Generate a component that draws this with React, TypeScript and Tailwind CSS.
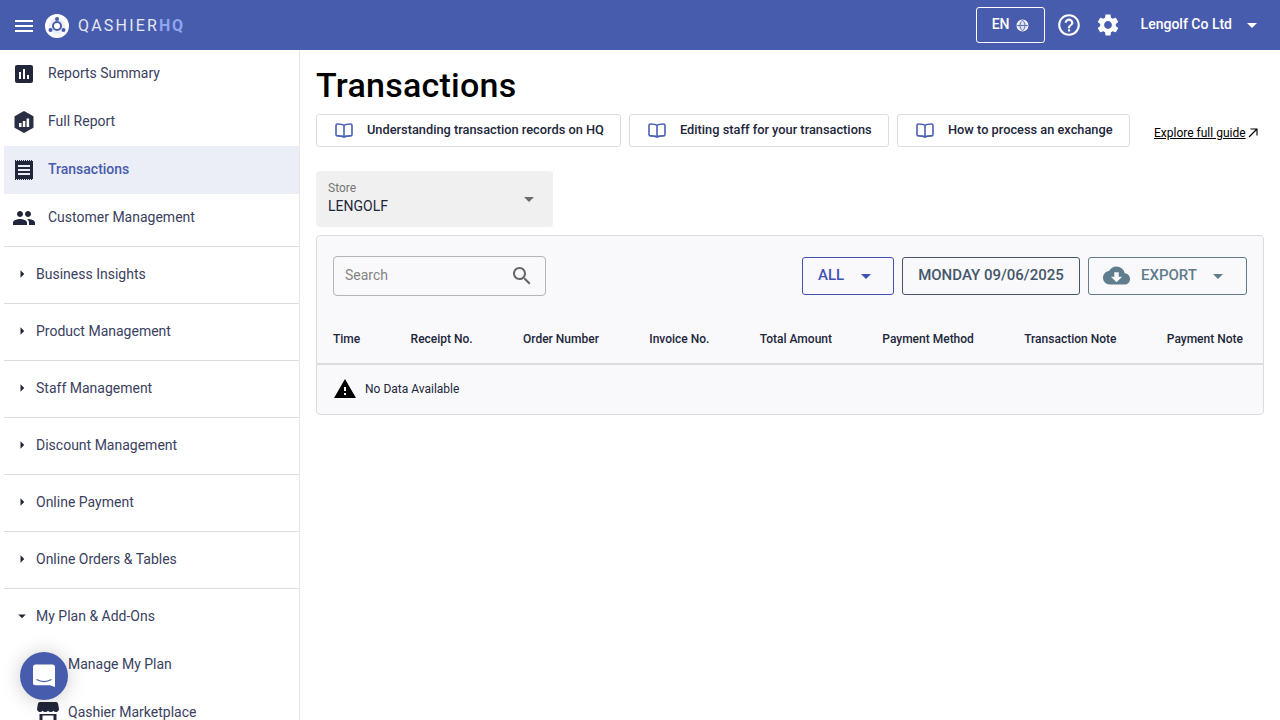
const menuItems = ['Business Insights', 'Product Management', 'Staff Management', 'Discount Management', 'Online Payment', 'Online Orders & Tables'];
const guides = [
  { label: 'Understanding transaction records on HQ', width: 'w-[305px]' },
  { label: 'Editing staff for your transactions', width: 'w-[260px]' },
  { label: 'How to process an exchange', width: 'w-[233px]' },
];
const columns = ['Time', 'Receipt No.', 'Order Number', 'Invoice No.', 'Total Amount', 'Payment Method', 'Transaction Note', 'Payment Note'];

function Icon({ d, className }: { d: string; className?: string }) {
  return (
    <svg viewBox="0 0 24 24" fill="currentColor" className={className}>
      <path d={d} />
    </svg>
  );
}

function Caret({ className }: { className?: string }) {
  return <Icon d="M7 10l5 5 5-5z" className={className} />;
}

function BookIcon() {
  return (
    <svg viewBox="0 0 18 15" fill="none" stroke="#4a5fb5" strokeWidth="1.600" strokeLinejoin="round" className="w-[18px] h-[15px]">
      <path d="M9 2.500C7.800 1.300 6 1 2.500 1 1.500 1 1 1.500 1 2.500v9c0 1 .5 1.400 1.500 1.400 3.500 0 5.300.3 6.500 1.300 1.200-1 3-1.300 6.500-1.300 1 0 1.500-.4 1.500-1.400v-9c0-1-.5-1.500-1.500-1.500C12 1 10.200 1.300 9 2.500zV14" />
    </svg>
  );
}

function NavItem({ label, active, icon }: { label: string; active?: boolean; icon: React.ReactNode }) {
  return (
    <div className={`h-12 ml-1 flex items-center text-sm ${active ? 'bg-[#ebeef6] text-[#485cad] font-medium' : 'text-[#3a4160]'}`}>
      <div className="w-11 pl-[8px] flex items-center text-[#22263a]">{icon}</div>
      <span className="-mt-0.5">{label}</span>
    </div>
  );
}

export default function App() {
  return (
    <div className="h-screen flex flex-col overflow-hidden bg-white font-['Roboto',sans-serif]">
      {/* Header */}
      <header className="h-[50px] flex-shrink-0 bg-[#485cad] flex items-center text-white">
        <Icon d="M3 18h18v-2H3v2zm0-5h18v-2H3v2zm0-7v2h18V6H3z" className="w-6 h-6 ml-3 mr-[9px] mt-0.5" />
        <svg viewBox="0 0 24 24" className="w-6 h-6 mt-0.5">
          <circle cx="12" cy="12" r="12" fill="#fff" />
          <circle cx="12" cy="12" r="8" fill="#eceef8" />
          <circle cx="12" cy="12" r="4" fill="#fff" stroke="#485cad" strokeWidth="2" />
          <circle cx="12" cy="5" r="2" fill="#485cad" />
          <circle cx="5.500" cy="16" r="2" fill="#485cad" />
          <circle cx="18.500" cy="16" r="2" fill="#485cad" />
        </svg>
        <div className="ml-[9px] mt-0.5 text-[16px] tracking-[2.200px] font-normal text-[#e4e7f4]">
          QASHIER<span className="font-bold tracking-[1.500px] text-[#8fa6ee]">HQ</span>
        </div>

        <div className="ml-auto flex items-center">
          <div className="w-[69px] h-9 border border-white rounded-[3px] flex items-center justify-center gap-[6px] text-sm font-medium">
            <span className="-mt-0.5">EN</span>
            <svg viewBox="0 0 24 24" fill="none" stroke="#fff" strokeWidth="2" className="w-[13px] h-[13px]">
              <circle cx="12" cy="12" r="10" fill="#dfe3f3" />
              <path d="M2 12h20M12 2c-6 6-6 14 0 20M12 2c6 6 6 14 0 20" stroke="#485cad" strokeWidth="1.500" />
            </svg>
          </div>
          <Icon d="M11 18h2v-2h-2v2zm1-16C6.480 2 2 6.480 2 12s4.480 10 10 10 10-4.480 10-10S17.520 2 12 2zm0 18c-4.410 0-8-3.590-8-8s3.590-8 8-8 8 3.590 8 8-3.590 8-8 8zm0-14c-2.210 0-4 1.790-4 4h2c0-1.100.9-2 2-2s2 .9 2 2c0 2-3 1.750-3 5h2c0-2.250 3-2.500 3-5 0-2.210-1.790-4-4-4z" className="w-[26px] h-[26px] ml-[11px]" />
          <Icon d="M19.140 12.940c.04-.3.06-.61.06-.94 0-.32-.02-.64-.07-.94l2.030-1.580c.18-.14.23-.41.12-.61l-1.920-3.320c-.12-.22-.37-.29-.59-.22l-2.390.96c-.5-.38-1.030-.7-1.620-.94l-.36-2.540c-.04-.24-.24-.41-.48-.41h-3.840c-.24 0-.43.17-.47.41l-.36 2.540c-.59.24-1.130.57-1.620.94l-2.390-.96c-.22-.08-.47 0-.59.22L2.740 8.870c-.12.21-.08.47.12.61l2.030 1.580c-.05.3-.09.63-.09.94s.02.64.07.94l-2.030 1.580c-.18.14-.23.41-.12.61l1.920 3.320c.12.22.37.29.59.22l2.390-.96c.5.38 1.030.7 1.620.94l.36 2.540c.05.24.24.41.48.41h3.840c.24 0 .44-.17.47-.41l.36-2.540c.59-.24 1.130-.56 1.620-.94l2.390.96c.22.08.47 0 .59-.22l1.920-3.320c.12-.22.07-.47-.12-.61l-2.010-1.580zM12 15.600c-1.980 0-3.600-1.620-3.600-3.600s1.620-3.600 3.600-3.600 3.600 1.620 3.600 3.600-1.620 3.600-3.600 3.600z" className="w-[26px] h-[26px] ml-[13px]" />
          <span className="ml-[20px] -mt-0.5 text-sm font-medium">Lengolf Co Ltd</span>
          <Caret className="w-6 h-6 ml-2 mr-4" />
        </div>
      </header>

      <div className="flex flex-1 overflow-hidden">
        {/* Sidebar */}
        <aside className="w-[300px] flex-shrink-0 border-r border-[#e6e6e6] overflow-hidden">
          <NavItem
            label="Reports Summary"
            icon={<Icon d="M19 3H5c-1.100 0-2 .9-2 2v14c0 1.100.9 2 2 2h14c1.100 0 2-.9 2-2V5c0-1.100-.9-2-2-2zM9 17H7v-7h2v7zm4 0h-2V7h2v10zm4 0h-2v-4h2v4z" className="w-6 h-6" />}
          />
          <NavItem
            label="Full Report"
            icon={
              <svg viewBox="0 0 24 24" className="w-6 h-6">
                <path d="M12 2l8.500 4.800v10.400L12 22l-8.500-4.800V6.800z" fill="#2b2f45" stroke="#2b2f45" strokeWidth="2" strokeLinejoin="round" />
                <path d="M7 13h2.500v4H7zM10.800 11h2.500v6h-2.500zM14.600 8.500h2.500V17h-2.500z" fill="#fff" />
              </svg>
            }
          />
          <NavItem
            label="Transactions"
            active
            icon={
              <svg viewBox="0 0 24 24" className="w-6 h-6">
                <path d="M3 3h18v18H3z" fill="#22263a" />
                <path d="M3 2.500h18M3 21.500h18" stroke="#22263a" strokeWidth="1" strokeDasharray="1 1" />
                <path d="M6 7h12v2H6zM6 11h12v2H6zM6 15h12v2H6z" fill="#ebeef6" />
              </svg>
            }
          />
          <NavItem
            label="Customer Management"
            icon={<Icon d="M16 11c1.660 0 2.990-1.340 2.990-3S17.660 5 16 5c-1.660 0-3 1.340-3 3s1.340 3 3 3zm-8 0c1.660 0 2.990-1.340 2.990-3S9.660 5 8 5C6.340 5 5 6.340 5 8s1.340 3 3 3zm0 2c-2.330 0-7 1.170-7 3.500V19h14v-2.500c0-2.330-4.670-3.500-7-3.500zm8 0c-.29 0-.62.02-.97.05 1.160.84 1.970 1.970 1.970 3.450V19h6v-2.500c0-2.330-4.670-3.500-7-3.500z" className="w-6 h-6" />}
          />
          <div className="h-1" />
          {menuItems.map((label) => (
            <div key={label} className="h-[57px] ml-1 border-t border-[#dcdcdc] flex items-center text-sm text-[#3a4160]">
              <Icon d="M10 17l5-5-5-5z" className="w-[18px] h-[18px] ml-[9px] mr-[5px] -mt-0.5 text-[#22263a]" />
              <span className="-mt-[3px]">{label}</span>
            </div>
          ))}
          <div className="h-[57px] -mb-[5px] ml-1 border-t border-[#dcdcdc] flex items-center text-sm text-[#3a4160]">
            <Caret className="w-[18px] h-[18px] ml-[9px] mr-[5px] -mt-0.5 text-[#22263a]" />
            <span className="-mt-[3px]">My Plan &amp; Add-Ons</span>
          </div>
          <div className="h-12 ml-1 pl-[64px] flex items-center text-sm text-[#3a4160]">Manage My Plan</div>
          <div className="h-12 ml-1 pl-[32px] flex items-center text-sm text-[#3a4160]">
            <svg viewBox="0 0 24 24" className="w-6 h-6 mr-2 text-[#22263a]" fill="currentColor">
              <path d="M4 2h16a2 2 0 0 1 2 1.600l1 5.400a3 3 0 0 1-5.500 1.700 3.500 3.500 0 0 1-5.500 0 3.500 3.500 0 0 1-5.500 0A3 3 0 0 1 1 9l1-5.400A2 2 0 0 1 4 2zM3.500 14h17v8h-17zm3 1.500V20h11v-4.500z" />
            </svg>
            Qashier Marketplace
          </div>
        </aside>

        {/* Main */}
        <main className="flex-1 pl-4 pr-4">
          <h1 className="mt-[14px] text-[34px] leading-[42px] tracking-[0.25px] font-medium text-black">Transactions</h1>

          <div className="mt-[8px] flex items-start gap-2">
            {guides.map((g) => (
              <div key={g.label} className={`${g.width} h-[33px] border border-[#dcdce6] rounded-[3px] flex items-center pl-[18px] text-[12.800px] font-medium text-[#22263a]`}>
                <BookIcon />
                <span className="ml-[14px] -mt-0.5">{g.label}</span>
              </div>
            ))}
            <div className="ml-4 mt-[11px] flex items-center text-xs text-black">
              <span className="underline">Explore full guide</span>
              <svg viewBox="0 0 10 10" fill="none" stroke="currentColor" strokeWidth="1.100" className="w-[10px] h-[10px] ml-0.5">
                <path d="M1 9l8-8M2.500 1H9v6.500" />
              </svg>
            </div>
          </div>

          <div className="mt-6 w-[237px] h-14 bg-[#f0f0f0] rounded-[4px] px-3 pt-[10px] relative">
            <div className="text-xs leading-[14px] text-[#757575]">Store</div>
            <div className="mt-[2px] text-sm leading-[18px] text-[#22263a]">LENGOLF</div>
            <Caret className="absolute right-[12px] top-[16px] w-6 h-6 text-[#6b6b6b]" />
          </div>

          {/* Table card */}
          <section className="mt-2 h-[180px] border border-[#dcdcdf] rounded-[4px] bg-[#f9f9fb]">
            <div className="flex items-start pt-5 px-4">
              <div className="w-[213px] h-10 border border-[#b5b5b8] rounded-[4px] flex items-center justify-between pl-[11px] pr-[11px] text-sm text-[#858585]">
                <span className="-mt-0.5">Search</span>
                <Icon d="M15.500 14h-.79l-.28-.27C15.410 12.590 16 11.110 16 9.500 16 5.910 13.090 3 9.500 3S3 5.910 3 9.500 5.910 16 9.500 16c1.610 0 3.090-.59 4.230-1.570l.27.28v.79l5 4.990L20.490 19l-4.990-5zm-6 0C7.010 14 5 11.990 5 9.500S7.010 5 9.500 5 14 7.010 14 9.500 11.990 14 9.500 14z" className="w-6 h-6 text-[#666]" />
              </div>
              <div className="ml-auto mt-px flex items-center gap-2">
                <div className="w-[92px] h-[38px] border border-[#3f51b5] rounded-[3px] flex items-center pl-[15px] text-[15px] font-medium text-[#3f51b5]">
                  <span className="-mt-0.5">ALL</span>
                  <Caret className="w-6 h-6 ml-[10px]" />
                </div>
                <div className="w-[178px] h-[38px] border border-[#45566a] rounded-[3px] flex items-center justify-center text-[15px] font-medium text-[#45566a]">
                  <span className="-mt-0.5">MONDAY 09/06/2025</span>
                </div>
                <div className="w-[159px] h-[38px] border border-[#5f7d8c] rounded-[3px] flex items-center pl-[14px] text-[15px] font-medium text-[#5f7d8c]">
                  <Icon d="M19.350 10.040C18.670 6.590 15.640 4 12 4 9.110 4 6.600 5.640 5.350 8.040 2.340 8.360 0 10.910 0 14c0 3.310 2.690 6 6 6h13c2.760 0 5-2.240 5-5 0-2.640-2.050-4.780-4.650-4.960zM17 13l-5 5-5-5h3V9h4v4h3z" className="w-[27px] h-[27px] -mt-0.5" />
                  <span className="ml-[11px] -mt-0.5">EXPORT</span>
                  <Caret className="w-6 h-6 ml-[9px]" />
                </div>
              </div>
            </div>

            <div className="mt-[23px] h-[46px] pl-4 pr-5 flex justify-between items-center text-xs font-medium text-[#22263a] border-b-2 border-[#dcdcdf]">
              {columns.map((c) => (
                <span key={c} className="-mt-1">{c}</span>
              ))}
            </div>
            <div className="h-[48px] pl-4 flex items-center text-xs text-[#22263a]">
              <Icon d="M1 21h22L12 2 1 21zm12-3h-2v-2h2v2zm0-4h-2v-4h2v4z" className="w-6 h-6 text-black" />
              <span className="ml-[8px]">No Data Available</span>
            </div>
          </section>
        </main>
      </div>

      {/* Chat launcher */}
      <div className="fixed left-5 bottom-5 w-12 h-12 rounded-full bg-[#485cad] shadow-[0_1px_20px_rgba(0,0,0,0.2)] flex items-center justify-center">
        <svg viewBox="0 0 24 24" className="w-6 h-6">
          <path d="M3.500 .5h17A2.500 2.500 0 0 1 23 3v20l-5-1.800H3.500A2.500 2.500 0 0 1 1 18.700V3A2.500 2.500 0 0 1 3.500 .5z" fill="#fff" />
          <path d="M4.500 15.500c4.500 2.500 10.500 2.500 15 0" fill="none" stroke="#485cad" strokeWidth="1.200" />
        </svg>
      </div>
    </div>
  );
}
